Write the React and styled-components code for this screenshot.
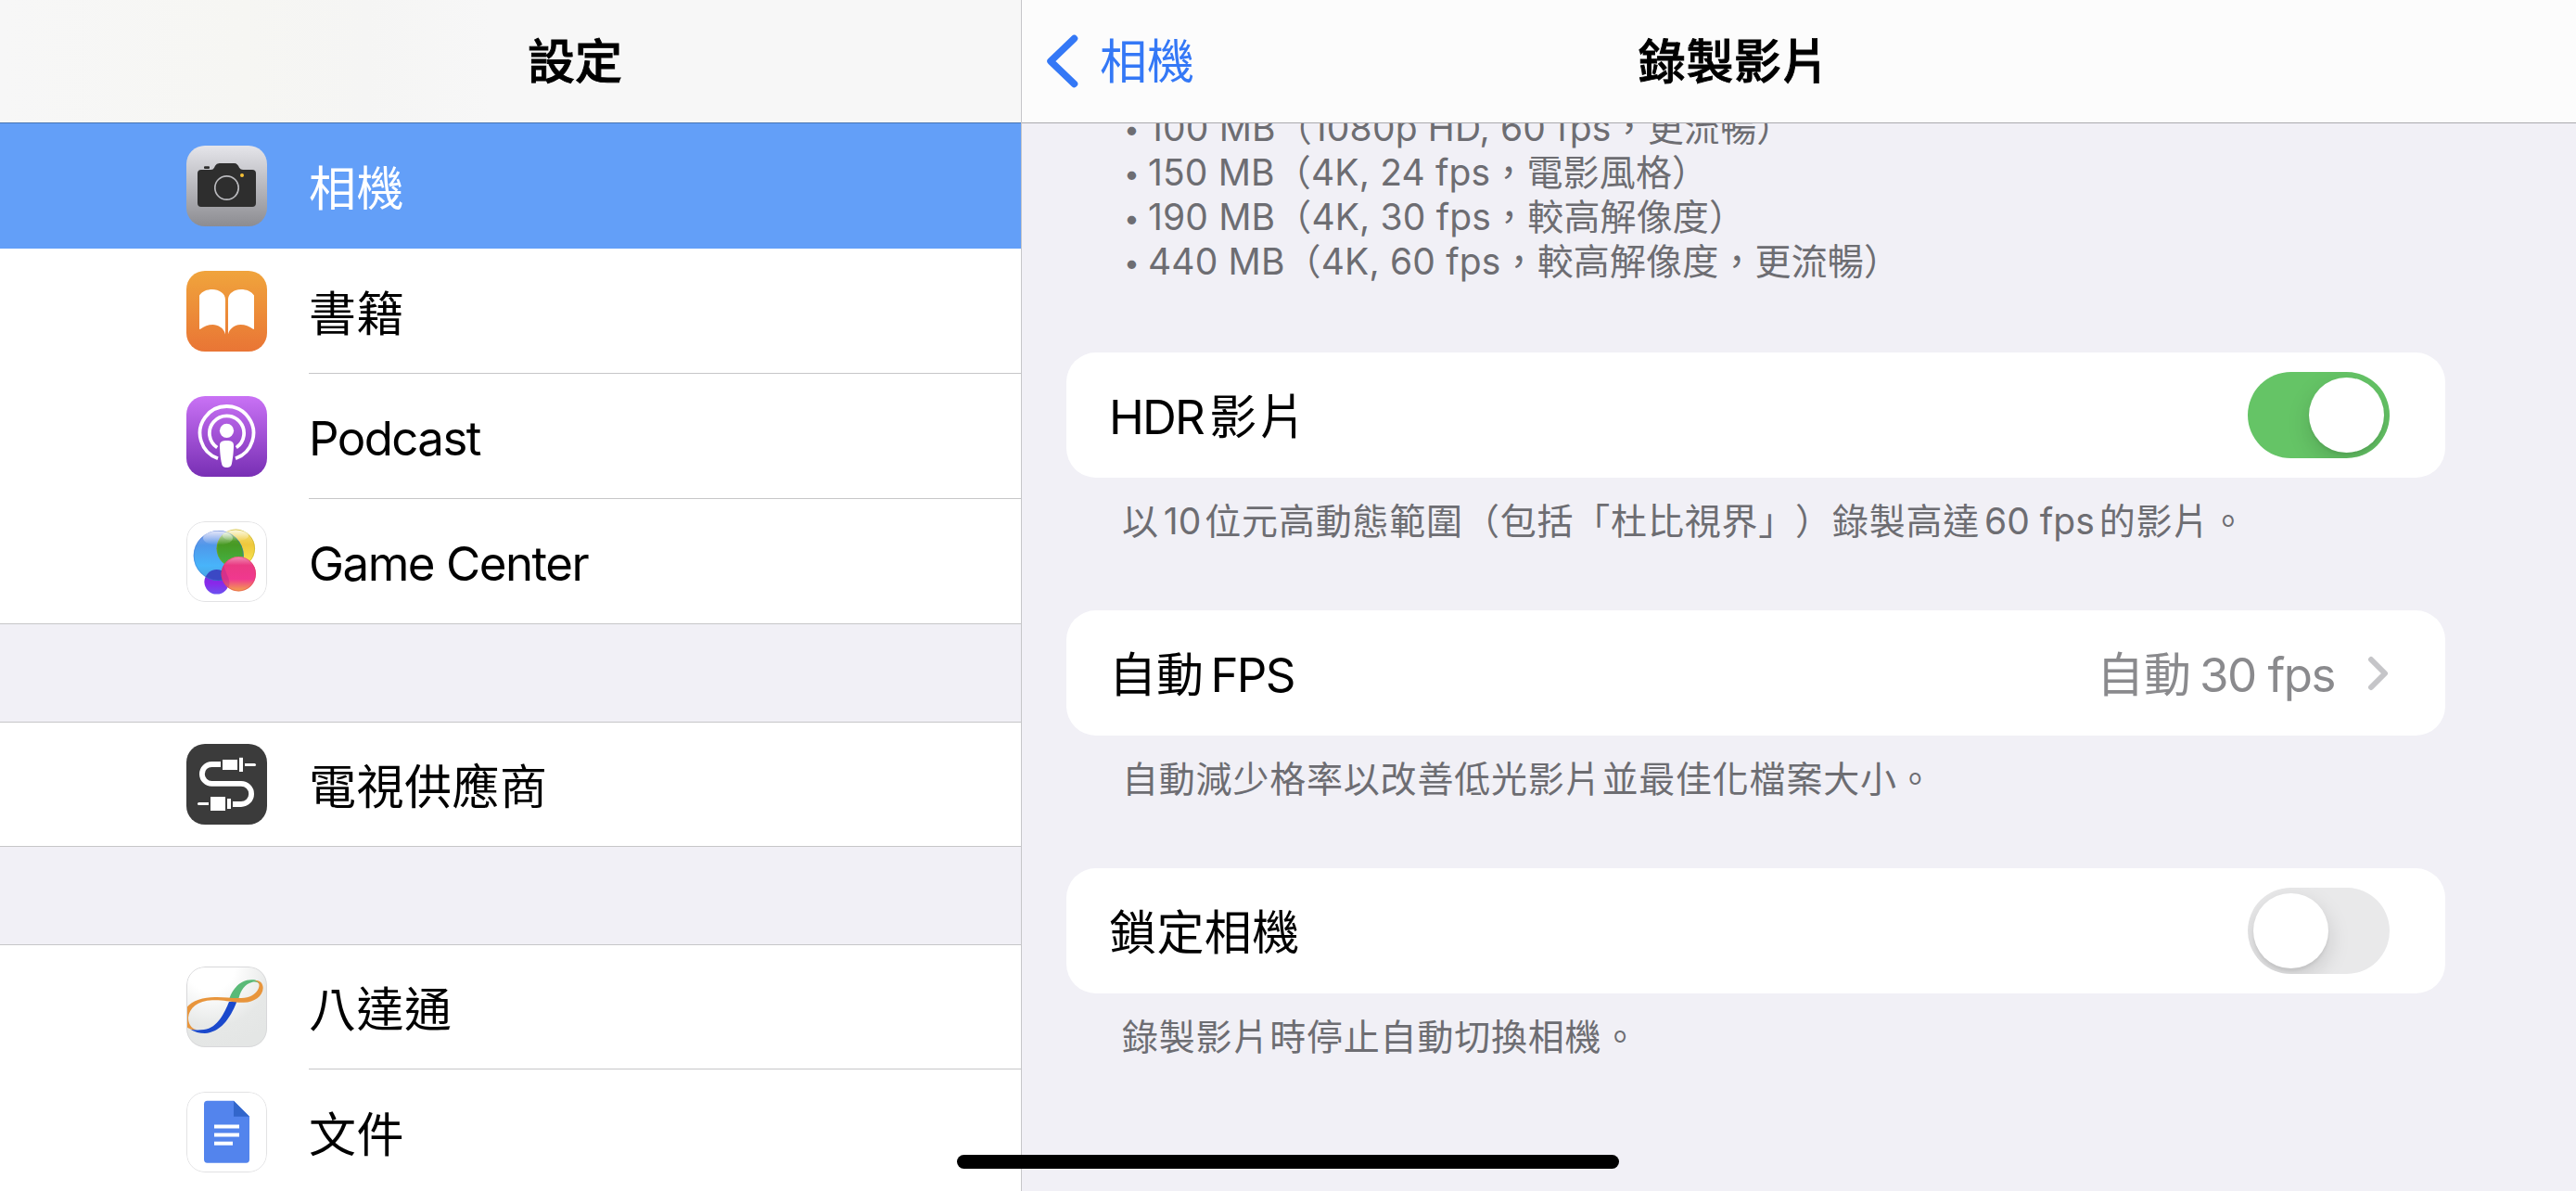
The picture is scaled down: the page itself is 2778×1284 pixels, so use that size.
import React from "react";
import styled, { createGlobalStyle } from "styled-components";

const GlobalStyle = createGlobalStyle`
  * {
    box-sizing: border-box;
  }
  body {
    margin: 0;
    overflow: hidden;
    background: #f1f0f6;
    font-family: Inter, "Noto Sans CJK TC", sans-serif;
    text-spacing-trim: space-all;
    -webkit-font-smoothing: antialiased;
  }
`;

const Screen = styled.div`
  position: relative;
  display: flex;
  width: 2778px;
  height: 1284px;
  overflow: hidden;
  color: #000;
`;

const Sidebar = styled.aside`
  display: flex;
  flex-direction: column;
  width: 1102px;
  height: 100%;
  border-right: 1px solid #c6c6c9;
  overflow: hidden;
`;

const SidebarHeader = styled.header`
  display: flex;
  flex: none;
  align-items: center;
  justify-content: center;
  height: 133px;
  padding-left: 139px;
  border-bottom: 1px solid #4674b2;
  background: linear-gradient(90deg, #f7f7f7 0%, #f6f6f3 24%, #f5f5f4 36%, #f7f7f7 48%, #f7f7f7 100%);
`;

const Title = styled.h1`
  margin: 0;
  padding-top: 2px;
  font-size: 51px;
  font-weight: 500;
  line-height: 60px;
  letter-spacing: ${(p) => p.$spacing || 0}px;
  -webkit-text-stroke: 0.9px #000;
`;

const Group = styled.div`
  display: flex;
  flex: none;
  flex-direction: column;
  margin-bottom: 105px;
  border-bottom: 1px solid #c6c6c8;
  border-top: ${(p) => (p.$first ? "none" : "1px solid #c6c6c8")};
  background: #fff;
`;

const SidebarRow = styled.div`
  display: flex;
  align-items: flex-start;
  height: ${(p) => p.$height || 135}px;
  padding: ${(p) => p.$top || 24}px 0 0 201px;
  background: ${(p) => (p.$active ? "#639ff8" : "#fff")};
  color: ${(p) => (p.$active ? "#fff" : "#000")};
`;

const AppIcon = styled.svg`
  flex: none;
  width: 87px;
  height: 87px;
  margin-right: 45px;
  border-radius: 20px;
`;

const RowLabel = styled.div`
  flex: 1;
  height: 111px;
  padding-top: ${(p) => (p.$spacing ? 16 : 17)}px;
  border-bottom: ${(p) => (p.$line ? "1px solid #c6c6c8" : "none")};
  font-size: 51px;
  line-height: 60px;
  letter-spacing: ${(p) => p.$spacing || 0.5}px;
  white-space: nowrap;
`;

const Main = styled.main`
  display: flex;
  flex: 1;
  flex-direction: column;
  background: #f1f0f6;
`;

const MainHeader = styled.header`
  display: grid;
  flex: none;
  grid-template-columns: 1fr auto 1fr;
  align-items: center;
  height: 133px;
  padding: 0 165px 0 25px;
  border-bottom: 1px solid #a9a9ad;
  background: #fcfcfc;
`;

const BackButton = styled.button`
  display: flex;
  align-items: center;
  gap: 23px;
  padding: 0;
  border: none;
  background: none;
  color: #3478f6;
  font-family: inherit;
  font-size: 51px;
  line-height: 60px;
`;

const BackLabel = styled.span`
  padding-top: 2px;
`;

const Content = styled.div`
  display: flex;
  flex: 1;
  flex-direction: column;
  padding: 0 141px 0 48px;
  overflow: hidden;
`;

const SizeList = styled.ul`
  flex: none;
  margin: -19px 0 74px;
  padding: 0 0 0 62px;
  list-style: none;
  color: #6d6d72;
  font-size: 39px;
  line-height: 48px;
  letter-spacing: 0.15px;
  white-space: pre;
`;

const SizeItem = styled.li`
  height: 48px;
`;

const Bullet = styled.span`
  display: inline-block;
  width: 26px;
  font-size: 30px;
  line-height: 30px;
  vertical-align: 2px;
`;

const Card = styled.div`
  display: flex;
  flex: none;
  align-items: center;
  justify-content: space-between;
  height: 135px;
  padding: 0 60px 0 46px;
  border-radius: 32px;
  background: #fff;
`;

const CardLabel = styled.div`
  padding-top: 5px;
  font-size: 51px;
  line-height: 60px;
  letter-spacing: ${(p) => p.$spacing || 0}px;
  white-space: nowrap;
`;

const CardValue = styled.div`
  display: flex;
  align-items: center;
  gap: 35px;
  color: #8a8a8d;
`;

const Footnote = styled.p`
  flex: none;
  height: 143px;
  margin: 0;
  padding: 23px 0 0 60px;
  color: #6d6d72;
  font-size: 39px;
  line-height: 48px;
  letter-spacing: 0.8px;
  white-space: nowrap;
`;

/* Latin run inside Chinese text, with the small gaps around it */
const Latin = styled.span`
  margin: 0 ${(p) => p.$right || 0}px 0 ${(p) => p.$left || 0}px;
  letter-spacing: ${(p) => p.$spacing || 0}px;
`;

const Track = styled.div`
  display: flex;
  justify-content: ${(p) => (p.$on ? "flex-end" : "flex-start")};
  width: 153px;
  height: 93px;
  padding: 6px;
  border-radius: 47px;
  background: ${(p) => (p.$on ? "#65c466" : "#e9e9ea")};
  overflow: hidden;
`;

const Knob = styled.div`
  width: 81px;
  height: 81px;
  border-radius: 50%;
  background: #fff;
  box-shadow: 0 9px 24px rgba(0, 0, 0, 0.15), 0 3px 3px rgba(0, 0, 0, 0.06);
`;

const HomeIndicator = styled.div`
  position: absolute;
  left: 1032px;
  bottom: 24px;
  width: 714px;
  height: 15px;
  border-radius: 8px;
  background: #000;
`;

const Switch = ({ on }) => (
  <Track $on={on}>
    <Knob />
  </Track>
);

const IconEdge = ({ color = "#e2e2e4" }) => (
  <rect x="0.5" y="0.5" width="86" height="86" rx="19.5" fill="none" stroke={color} />
);

const CameraIcon = () => (
  <AppIcon viewBox="0 0 87 87">
    <defs>
      <linearGradient id="camera" x1="0" y1="0" x2="0" y2="1">
        <stop offset="0" stopColor="#e5e5ea" />
        <stop offset="1" stopColor="#8c8c91" />
      </linearGradient>
    </defs>
    <rect width="87" height="87" fill="url(#camera)" />
    <rect x="19" y="22.3" width="6" height="2.7" rx="1" fill="#2e2e2e" />
    <path
      d="M16 26 H26.5 Q29 26 30.2 23.5 L31 21.8 Q32.5 19 35.5 19 H51.5 Q54.5 19 56 21.8 L57 23.8 Q58.5 26 61 26 H71 Q75 26 75 30 V62 Q75 66 71 66 H16 Q12 66 12 62 V30 Q12 26 16 26Z"
      fill="#2e2e2e"
    />
    <circle cx="43.5" cy="45.5" r="12.7" fill="none" stroke="#b9b9bd" strokeWidth="1.7" />
    <circle cx="60" cy="32" r="2" fill="#f6c136" />
  </AppIcon>
);

const BooksIcon = () => (
  <AppIcon viewBox="0 0 87 87">
    <defs>
      <linearGradient id="books" x1="0" y1="0" x2="0" y2="1">
        <stop offset="0" stopColor="#f0a43c" />
        <stop offset="1" stopColor="#e97535" />
      </linearGradient>
    </defs>
    <rect width="87" height="87" fill="url(#books)" />
    <path d="M14 26.5 C17 22 22.5 20 28 20 C35 20 42 24 42 31 V68.5 C40.5 61.5 34 58 28.5 58 C23.5 58 19 59.8 15.5 62.5 Q14 63.5 14 62Z" fill="#fff" />
    <path d="M73 26.5 C70 22 64.5 20 59 20 C52 20 45 24 45 31 V68.5 C46.5 61.5 53 58 58.5 58 C63.5 58 68 59.8 71.5 62.5 Q73 63.5 73 62Z" fill="#fff" />
  </AppIcon>
);

const PodcastIcon = () => (
  <AppIcon viewBox="0 0 87 87">
    <defs>
      <linearGradient id="podcast" x1="0" y1="0" x2="0" y2="1">
        <stop offset="0" stopColor="#c972f5" />
        <stop offset="1" stopColor="#782fb4" />
      </linearGradient>
    </defs>
    <rect width="87" height="87" fill="url(#podcast)" />
    <g fill="none" stroke="#fff" strokeWidth="3.8">
      <path d="M34 67.2 A28.9 28.9 0 1 1 53 67.2" />
      <path d="M33.2 55.5 A18.6 18.6 0 1 1 53.8 55.5" />
    </g>
    <circle cx="43.5" cy="37.3" r="7.6" fill="#fff" />
    <path d="M36 53 C36 49 39 48 43.5 48 C48 48 51 49 51 53 C51 60 50 68 49 72.5 C48.4 76 46.5 77 43.5 77 C40.5 77 38.6 76 38 72.5 C37 68 36 60 36 53Z" fill="#fff" />
  </AppIcon>
);

const GameCenterIcon = () => (
  <AppIcon viewBox="0 0 87 87">
    <defs>
      <linearGradient id="gcBlue" x1="0" y1="0" x2="0" y2="1">
        <stop offset="0" stopColor="#8a9be8" />
        <stop offset="0.3" stopColor="#4f98ea" />
        <stop offset="0.7" stopColor="#48b4fa" />
        <stop offset="1" stopColor="#4aa3dc" />
      </linearGradient>
      <linearGradient id="gcYellow" x1="0" y1="0" x2="0" y2="1">
        <stop offset="0" stopColor="#f3e07a" />
        <stop offset="0.4" stopColor="#efc83c" />
        <stop offset="1" stopColor="#fbec55" />
      </linearGradient>
      <linearGradient id="gcGreen" x1="0" y1="0" x2="0" y2="1">
        <stop offset="0" stopColor="#6aa33c" />
        <stop offset="0.4" stopColor="#479a24" />
        <stop offset="1" stopColor="#43b548" />
      </linearGradient>
      <linearGradient id="gcPink" x1="0" y1="0" x2="0" y2="1">
        <stop offset="0" stopColor="#f08fb4" />
        <stop offset="0.25" stopColor="#ea3a83" />
        <stop offset="0.65" stopColor="#f0388f" />
        <stop offset="1" stopColor="#f3a44a" />
      </linearGradient>
      <linearGradient id="gcPurple" x1="0" y1="0" x2="0" y2="1">
        <stop offset="0" stopColor="#5b3fd0" />
        <stop offset="0.55" stopColor="#8a27ea" />
        <stop offset="1" stopColor="#6a52f0" />
      </linearGradient>
      <linearGradient id="gcShine" x1="0" y1="0" x2="0" y2="1">
        <stop offset="0" stopColor="#fff" stopOpacity="0.75" />
        <stop offset="1" stopColor="#fff" stopOpacity="0" />
      </linearGradient>
      <clipPath id="gcBlueClip">
        <circle cx="34.7" cy="37" r="27" />
      </clipPath>
    </defs>
    <rect width="87" height="87" fill="#fff" />
    <circle cx="32.7" cy="65.3" r="13.3" fill="url(#gcPurple)" />
    <circle cx="53.3" cy="29.3" r="20.7" fill="url(#gcYellow)" />
    <circle cx="34.7" cy="37" r="27" fill="url(#gcBlue)" />
    <g clipPath="url(#gcBlueClip)">
      <circle cx="53.3" cy="29.3" r="20.7" fill="url(#gcGreen)" />
      <circle cx="32.7" cy="65.3" r="13.3" fill="#3b48c4" />
    </g>
    <circle cx="34.7" cy="37" r="26.6" fill="none" stroke="#3d6fd0" strokeOpacity="0.5" strokeWidth="0.8" />
    <circle cx="53.3" cy="29.3" r="20.3" fill="none" stroke="#a9a015" strokeOpacity="0.5" strokeWidth="0.8" />
    <ellipse cx="34" cy="18" rx="16" ry="7.5" fill="url(#gcShine)" />
    <ellipse cx="53" cy="15.5" rx="14" ry="6" fill="url(#gcShine)" />
    <circle cx="56.3" cy="56.7" r="18.7" fill="url(#gcPink)" />
    <path d="M40 47.5 A18.7 18.7 0 0 0 45.6 71.8 Q48 65 44 58Z" fill="#a3228e" fillOpacity="0.35" />
    <circle cx="56.3" cy="56.7" r="18.3" fill="none" stroke="#e03a50" strokeOpacity="0.6" strokeWidth="0.8" />
    <IconEdge />
  </AppIcon>
);

const TvIcon = () => (
  <AppIcon viewBox="0 0 87 87">
    <rect width="87" height="87" fill="#3b3b3b" />
    <path d="M37 22 H27.3 A10.4 10.4 0 0 0 27.3 42.8 H59 A11.1 11.1 0 0 1 59 65 H50" fill="none" stroke="#fff" strokeWidth="5.8" />
    <g fill="#fff">
      <rect x="39" y="17" width="16" height="11" />
      <rect x="57" y="14.8" width="4" height="15.2" />
      <path d="M63 21 H73.5 A1.5 1.5 0 0 1 73.5 24 H63Z" />
      <rect x="26" y="57" width="16" height="15" />
      <rect x="44" y="59" width="4" height="11" />
      <path d="M24 63 H13.5 A1.5 1.5 0 0 0 13.5 66 H24Z" />
    </g>
  </AppIcon>
);

const OctopusIcon = () => (
  <AppIcon viewBox="0 0 87 87">
    <defs>
      <radialGradient id="octopus" cx="0.3" cy="0" r="1">
        <stop offset="0.3" stopColor="#fff" />
        <stop offset="0.75" stopColor="#e6e8e7" />
        <stop offset="1" stopColor="#e4e6e5" />
      </radialGradient>
    </defs>
    <rect width="87" height="87" fill="url(#octopus)" />
    <path d="M46.5 34 C50 23 59 14 71 14.3 C76 14.5 79 16 78.5 19 C77 16.5 74 16 70.5 17 C63 19 59 25 56.5 34Z" fill="#5aba78" />
    <path d="M4 67.5 C9 70.5 14 72 20 72 C36 71 47 57 54.3 38 H46 C41 50 34 66 19 68 C13 68.7 8 68.5 4 67.5Z" fill="#1b49cc" />
    <path
      d="M-1 46 C5 36 20 32.5 33 33 C48 33.5 60 35.5 68 32.5 C75 30 79.5 23 78.3 19 C77.8 16.7 76 15.8 73.5 15 C79 14.5 82.5 17.5 82.7 23 C82.5 32 73 38.5 62 38.8 C50 39.2 42 35.8 28 36.3 C12 37 3 45 2 55 C1.8 61 5 67 11 68 C6 68.5 2 67 -1 64Z"
      fill="#e8953c"
    />
    <IconEdge color="#d8d8da" />
  </AppIcon>
);

const DocsIcon = () => (
  <AppIcon viewBox="0 0 87 87">
    <rect width="87" height="87" fill="#fff" />
    <path d="M22.5 9.8 H51 L68 26.8 V73 Q68 76.7 64.5 76.7 H22.5 Q19 76.7 19 73 V13.3 Q19 9.8 22.5 9.8Z" fill="#5384ed" />
    <path d="M51 9.8 L68 26.8 H51Z" fill="#3266cb" />
    <g fill="#fff">
      <rect x="30" y="35.5" width="27" height="4" />
      <rect x="30" y="44.5" width="27" height="4" />
      <rect x="30" y="53.7" width="20" height="4" />
    </g>
    <IconEdge />
  </AppIcon>
);

const BackChevron = () => (
  <svg width="36" height="60" viewBox="0 0 36 60" fill="none">
    <path d="M31.5 5.5 L6 30 L31.5 54.5" stroke="#3478f6" strokeWidth="7.5" strokeLinecap="round" strokeLinejoin="round" />
  </svg>
);

const Chevron = () => (
  <svg width="24" height="40" viewBox="0 0 24 40" fill="none">
    <path d="M4 5 L19 20 L4 35" stroke="#c5c5c8" strokeWidth="6" strokeLinecap="round" strokeLinejoin="round" />
  </svg>
);

const sizes = [
  "100 MB（1080p HD, 60 fps，更流暢）",
  "150 MB（4K, 24 fps，電影風格）",
  "190 MB（4K, 30 fps，較高解像度）",
  "440 MB（4K, 60 fps，較高解像度，更流暢）",
];

const App = () => {
  return (
    <Screen>
      <GlobalStyle />
      <Sidebar>
        <SidebarHeader>
          <Title>設定</Title>
        </SidebarHeader>
        <Group $first>
          <SidebarRow $active>
            <CameraIcon />
            <RowLabel>相機</RowLabel>
          </SidebarRow>
          <SidebarRow>
            <BooksIcon />
            <RowLabel $line>書籍</RowLabel>
          </SidebarRow>
          <SidebarRow>
            <PodcastIcon />
            <RowLabel $line $spacing={-1.6}>Podcast</RowLabel>
          </SidebarRow>
          <SidebarRow $height={134}>
            <GameCenterIcon />
            <RowLabel $spacing={-1.5}>Game Center</RowLabel>
          </SidebarRow>
        </Group>
        <Group>
          <SidebarRow $height={133} $top={23}>
            <TvIcon />
            <RowLabel>電視供應商</RowLabel>
          </SidebarRow>
        </Group>
        <Group>
          <SidebarRow $height={134} $top={23}>
            <OctopusIcon />
            <RowLabel $line>八達通</RowLabel>
          </SidebarRow>
          <SidebarRow>
            <DocsIcon />
            <RowLabel>文件</RowLabel>
          </SidebarRow>
        </Group>
      </Sidebar>
      <Main>
        <MainHeader>
          <BackButton>
            <BackChevron />
            <BackLabel>相機</BackLabel>
          </BackButton>
          <Title $spacing={0.6}>錄製影片</Title>
        </MainHeader>
        <Content>
          <SizeList>
            {sizes.map((size) => (
              <SizeItem key={size}>
                <Bullet>•</Bullet>
                {size}
              </SizeItem>
            ))}
          </SizeList>
          <Card>
            <CardLabel $spacing={2.5}>
              <Latin $right={6} $spacing={-1.8}>HDR</Latin>影片
            </CardLabel>
            <Switch on />
          </Card>
          <Footnote>
            以<Latin $left={5} $right={4}>10</Latin>位元高動態範圍（包括「杜比視界」）錄製高達
            <Latin $left={5} $right={5}>60 fps</Latin>的影片。
          </Footnote>
          <Card>
            <CardLabel>
              自動<Latin $left={-5} $spacing={-1.8}> FPS</Latin>
            </CardLabel>
            <CardValue>
              <CardLabel>
                自動<Latin $left={-4} $spacing={-1.5}> 30 fps</Latin>
              </CardLabel>
              <Chevron />
            </CardValue>
          </Card>
          <Footnote>自動減少格率以改善低光影片並最佳化檔案大小。</Footnote>
          <Card>
            <CardLabel $spacing={0.4}>鎖定相機</CardLabel>
            <Switch />
          </Card>
          <Footnote>錄製影片時停止自動切換相機。</Footnote>
        </Content>
      </Main>
      <HomeIndicator />
    </Screen>
  );
};

export default App;
